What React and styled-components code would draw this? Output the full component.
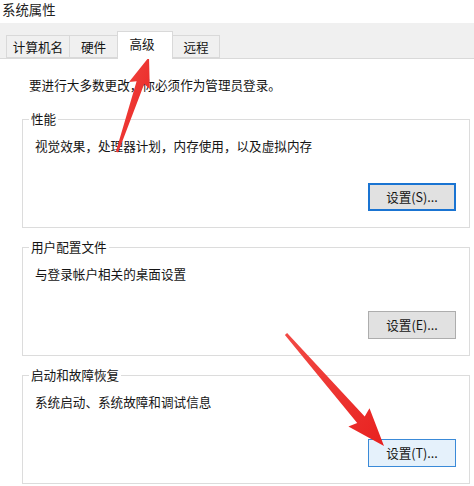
import React from 'react';
import styled, { createGlobalStyle } from 'styled-components';

const GlobalStyle = createGlobalStyle`
  html, body {
    margin: 0;
    padding: 0;
    background: #fff;
  }
  body {
    font-family: "Noto Sans CJK SC", "Noto Sans", "Liberation Sans", sans-serif;
    color: #141414;
    -webkit-font-smoothing: antialiased;
  }
`;

const tabs = [
  { label: '计算机名', w: 64 },
  { label: '硬件', w: 49 },
  { label: '高级', w: 56, active: true },
  { label: '远程', w: 48 },
];

const groups = [
  { title: '性能', desc: '视觉效果，处理器计划，内存使用，以及虚拟内存', button: '设置(S)...', state: 'focus' },
  { title: '用户配置文件', desc: '与登录帐户相关的桌面设置', button: '设置(E)...' },
  { title: '启动和故障恢复', desc: '系统启动、系统故障和调试信息', button: '设置(T)...', state: 'hover' },
];

// red annotation arrows, tail -> tip
const arrows = [
  { from: [117, 152], to: [149, 57], head: 27, wing: 11, neck: 4, tail: 1.2 },
  { from: [286, 334], to: [384, 446], head: 35, wing: 14, neck: 5, tail: 1.5 },
];

function arrowPoints({ from, to, head, wing, neck, tail }) {
  const dx = to[0] - from[0];
  const dy = to[1] - from[1];
  const len = Math.hypot(dx, dy);
  const ux = dx / len;
  const uy = dy / len;
  const nx = -uy;
  const ny = ux;
  const bx = to[0] - ux * head;
  const by = to[1] - uy * head;
  const pts = [
    [from[0] + nx * tail, from[1] + ny * tail],
    [bx + nx * neck, by + ny * neck],
    [bx + nx * wing - ux * 3, by + ny * wing - uy * 3],
    to,
    [bx - nx * wing - ux * 3, by - ny * wing - uy * 3],
    [bx - nx * neck, by - ny * neck],
    [from[0] - nx * tail, from[1] - ny * tail],
  ];
  return pts.map((p) => p.map((v) => v.toFixed(1)).join(',')).join(' ');
}

function App() {
  return (
    <>
      <GlobalStyle />
      <Window>
        <TitleBar>系统属性</TitleBar>
        <TabStrip>
          {tabs.map((t) => (
            <Tab key={t.label} $w={t.w} $active={t.active}>
              {t.label}
            </Tab>
          ))}
        </TabStrip>
        <Panel>
          <Notice>要进行大多数更改，你必须作为管理员登录。</Notice>
          <GroupList>
            {groups.map((g) => (
              <Group key={g.title}>
                <Legend>{g.title}</Legend>
                <Desc>{g.desc}</Desc>
                <Button $state={g.state}>{g.button}</Button>
              </Group>
            ))}
          </GroupList>
        </Panel>
        <Overlay viewBox="0 0 474 486" width="474" height="486">
          <defs>
            <linearGradient id="red" x1="0" y1="0" x2="1" y2="1">
              <stop offset="0" stopColor="#f24a45" />
              <stop offset="1" stopColor="#e8211f" />
            </linearGradient>
          </defs>
          {arrows.map((a, i) => (
            <polygon key={i} points={arrowPoints(a)} fill="url(#red)" />
          ))}
        </Overlay>
      </Window>
    </>
  );
}

export default App;

const Window = styled.div`
  position: relative;
  width: 474px;
  height: 486px;
  overflow: hidden;
  background: #fff;
  font-size: 12.6px;
`;

const TitleBar = styled.div`
  box-sizing: border-box;
  height: 23px;
  padding: 1px 0 0 2px;
  font-size: 13.4px;
  line-height: 16px;
  color: #222;
`;

const TabStrip = styled.div`
  display: flex;
  align-items: flex-end;
  height: 35px;
  padding-left: 7px;
  background: #f0f0f0;
  border-bottom: 1px solid #d9d9d9;
`;

const Tab = styled.div`
  position: relative;
  display: flex;
  align-items: center;
  justify-content: center;
  box-sizing: border-box;
  width: ${(p) => p.$w}px;
  height: ${(p) => (p.$active ? 28 : 23)}px;
  margin-left: -1px;
  margin-bottom: ${(p) => (p.$active ? -1 : 0)}px;
  padding-bottom: ${(p) => (p.$active ? 3 : 0)}px;
  padding-right: ${(p) => (p.$active ? 6 : 0)}px;
  border: 1px solid #d9d9d9;
  border-bottom: ${(p) => (p.$active ? 'none' : '1px solid #d9d9d9')};
  background: ${(p) => (p.$active ? '#fff' : '#f0f0f0')};
  z-index: ${(p) => (p.$active ? 1 : 0)};
  line-height: 16px;
  white-space: nowrap;
`;

const Panel = styled.div`
  padding: 18px 4px 0 22px;
`;

const Notice = styled.div`
  margin-left: 7px;
  line-height: 16px;
`;

const GroupList = styled.div`
  display: flex;
  flex-direction: column;
  gap: 19px;
  margin-top: 26px;
`;

const Group = styled.div`
  display: flex;
  flex-direction: column;
  padding: 0 13px 16px 12px;
  border: 1px solid #dcdcdc;
`;

const Legend = styled.div`
  align-self: flex-start;
  margin: -9px 0 0 -6px;
  padding: 0 2px;
  background: #fff;
  line-height: 16px;
`;

const Desc = styled.div`
  margin-top: 11px;
  line-height: 16px;
`;

const Button = styled.div`
  align-self: flex-end;
  display: flex;
  align-items: center;
  justify-content: center;
  box-sizing: border-box;
  width: 88px;
  height: 28px;
  margin-top: 29px;
  border: ${(p) =>
    p.$state === 'focus' ? '2px solid #1a74d2' : p.$state === 'hover' ? '1px solid #3a8ad8' : '1px solid #adadad'};
  background: ${(p) => (p.$state === 'hover' ? '#e5f1fb' : '#e1e1e1')};
  line-height: 16px;
  white-space: nowrap;
`;

const Overlay = styled.svg`
  position: absolute;
  left: 0;
  top: 0;
  pointer-events: none;
`;
